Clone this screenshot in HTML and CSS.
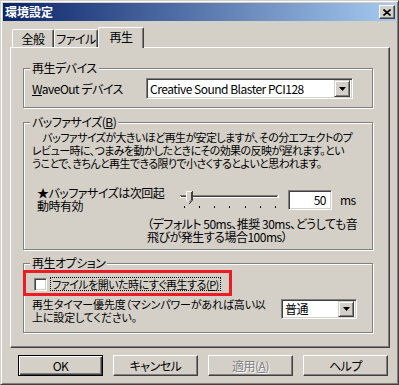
FILE: index.html
```html
<!DOCTYPE html>
<html lang="ja">
<head>
    <meta charset="UTF-8">
    <title>環境設定</title>
    <link rel="stylesheet" href="styles.css">
</head>
<body>
    <div class="window">
        <div class="titlebar">
            <span class="title">環境設定</span>
            <span class="close">
                <svg width="8" height="7" viewBox="0 0 8 7"><path d="M0.5 0.5 L7.5 6.5 M7.5 0.5 L0.5 6.5" stroke="#000" stroke-width="1.6"/></svg>
            </span>
        </div>

        <div class="tabbox">
            <div class="tabs">
                <div class="tab tab-general">全般</div>
                <div class="tab tab-file">ファイル</div>
                <div class="tab active">再生</div>
            </div>

            <div class="panel">
                <!-- 再生デバイス -->
                <div class="group group-device">
                    <div class="legend">再生デバイス</div>
                    <div class="device-row">
                        <span><u>W</u>aveOut デバイス</span>
                        <div class="combo combo-device">
                            <span class="combo-text">Creative Sound Blaster PCI128</span>
                            <span class="drop"><svg width="7" height="4"><polygon points="0,0 7,0 3.5,4" fill="#000"/></svg></span>
                        </div>
                    </div>
                </div>

                <!-- バッファサイズ -->
                <div class="group group-buffer">
                    <div class="legend">バッファサイズ(<u>B</u>)</div>
                    <p class="desc">　バッファサイズが大きいほど再生が安定しますが、その分エフェクトのプ<br>レビュー時に、つまみを動かしたときにその効果の反映が遅れます。とい<br>うことで、きちんと再生できる限りで小さくするとよいと思われます。</p>
                    <div class="buf-row">
                        <div class="buf-label">★バッファサイズは次回起<br>動時有効</div>
                        <svg class="slider" width="100" height="18" viewBox="0 0 100 18">
                            <rect x="1" y="4" width="98" height="1" fill="#808080"/>
                            <rect x="2" y="5" width="96" height="1" fill="#404040"/>
                            <rect x="1" y="6" width="99" height="1" fill="#fff"/>
                            <rect x="99" y="4" width="1" height="3" fill="#fff"/>
                            <polygon points="7,0 13,0 13,9 10,12 7,9" fill="#d4d0c8"/>
                            <path d="M7.5 9 V0.5 H12.5" stroke="#fff" fill="none"/>
                            <path d="M13.5 0 V9.5 L10 13 M12.5 1 V9 L10 11.5" stroke="#404040" fill="none" stroke-width="1"/>
                            <path d="M7.5 9 L10 11.5" stroke="#fff" fill="none"/>
                            <rect x="5" y="15" width="1" height="2" fill="#000"/>
                            <rect x="20" y="15" width="1" height="2" fill="#000"/>
                            <rect x="35" y="15" width="1" height="2" fill="#000"/>
                            <rect x="50" y="15" width="1" height="2" fill="#000"/>
                            <rect x="66" y="15" width="1" height="2" fill="#000"/>
                            <rect x="81" y="15" width="1" height="2" fill="#000"/>
                            <rect x="96" y="15" width="1" height="2" fill="#000"/>
                        </svg>
                        <div class="edit">50</div>
                        <span class="unit">ms</span>
                    </div>
                    <div class="note">（デフォルト 50ms、推奨 30ms、どうしても音<br>飛びが発生する場合100ms）</div>
                </div>

                <!-- 再生オプション -->
                <div class="group group-option">
                    <div class="legend">再生オプション</div>
                    <div class="check-row">
                        <span class="checkbox"></span>
                        <span class="focus">ファイルを開いた時にすぐ再生する(<u>P</u>)</span>
                    </div>
                    <div class="timer-row">
                        <div class="timer-text">再生タイマー優先度（マシンパワーがあれば高い以<br>上に設定してください。</div>
                        <div class="combo combo-timer">
                            <span class="combo-text">普通</span>
                            <span class="drop"><svg width="7" height="4"><polygon points="0,0 7,0 3.5,4" fill="#000"/></svg></span>
                        </div>
                    </div>
                    <div class="highlight"></div>
                </div>
            </div>
        </div>

        <div class="buttons">
            <button class="btn default">OK</button>
            <button class="btn">キャンセル</button>
            <button class="btn disabled">適用(<u>A</u>)</button>
            <button class="btn">ヘルプ</button>
        </div>
    </div>
</body>
</html>
```

FILE: styles.css
```css
body {
    margin: 0;
    font-family: "Noto Sans CJK JP", sans-serif;
    font-size: 12px;
    font-feature-settings: "palt";
    letter-spacing: -0.5px;
    color: #000;
    background: #d4d0c8;
}

.window {
    width: 399px;
    height: 385px;
    box-sizing: border-box;
    background: #d4d0c8;
    border: 1px solid;
    border-color: #d4d0c8 #404040 #404040 #d4d0c8;
    box-shadow: inset 1px 1px #fff, inset -1px -1px #808080;
    padding: 2px;
}

.titlebar {
    height: 18px;
    display: flex;
    align-items: center;
    justify-content: space-between;
    padding: 0 1px 0 2px;
    background: linear-gradient(to right, #0a246a, #a6caf0);
}

.title {
    color: #fff;
    font-weight: bold;
    line-height: 14px;
    letter-spacing: 0;
}

.close {
    width: 16px;
    height: 14px;
    box-sizing: border-box;
    display: flex;
    align-items: center;
    justify-content: center;
    background: #d4d0c8;
    border: 1px solid;
    border-color: #fff #404040 #404040 #fff;
    box-shadow: inset -1px -1px #808080;
}

/* タブ */
.tabbox {
    margin: 6px 0 0 7px;
    width: 380px;
}

.tabs {
    display: flex;
    align-items: flex-end;
    height: 20px;
    padding-left: 2px;
}

.tab {
    height: 18px;
    box-sizing: border-box;
    border: 1px solid;
    border-color: #fff #404040 transparent #fff;
    border-bottom: none;
    border-radius: 2px 2px 0 0;
    box-shadow: inset -1px 0 #808080;
    text-align: center;
    line-height: 16px;
    padding-top: 1px;
}

.tab-general {
    width: 42px;
}

.tab-file {
    width: 44px;
}

.tab.active {
    width: 46px;
    height: 21px;
    margin-bottom: -1px;
    position: relative;
    background: #d4d0c8;
    padding-top: 0;
    line-height: 17px;
}

.panel {
    height: 301px;
    box-sizing: border-box;
    border: 1px solid;
    border-color: #fff #404040 #404040 #fff;
    box-shadow: inset -1px -1px #808080;
    padding-top: 20px;
}

/* グループボックス */
.group {
    position: relative;
    width: 350px;
    box-sizing: border-box;
    margin-left: 12px;
    border: 1px solid #808080;
    box-shadow: inset 1px 1px #fff, 1px 1px #fff;
}

.legend {
    width: max-content;
    margin: -7px 0 0 6px;
    padding: 0 2px;
    background: #d4d0c8;
    line-height: 12px;
}

.group-device {
    height: 40px;
}

.group-buffer {
    height: 128px;
    margin-top: 14px;
}

.group-option {
    height: 70px;
    margin-top: 13px;
}

.device-row {
    display: grid;
    grid-template-columns: 114px 207px;
    align-items: center;
    margin-top: 4px;
    padding-left: 8px;
}

/* コンボボックス */
.combo {
    height: 21px;
    box-sizing: border-box;
    display: flex;
    align-items: center;
    justify-content: space-between;
    background: #fff;
    border: 1px solid;
    border-color: #808080 #fff #fff #808080;
    box-shadow: inset 1px 1px #404040, inset -1px -1px #d4d0c8;
    padding: 2px 2px 2px 3px;
}

.combo-text {
    line-height: 14px;
    white-space: nowrap;
}

.drop {
    width: 16px;
    height: 17px;
    box-sizing: border-box;
    display: flex;
    align-items: center;
    justify-content: center;
    background: #d4d0c8;
    border: 1px solid;
    border-color: #d4d0c8 #404040 #404040 #d4d0c8;
    box-shadow: inset 1px 1px #fff, inset -1px -1px #808080;
}

.desc {
    margin: 3px 0 0;
    padding-left: 8px;
    font-size: 11px;
    letter-spacing: -0.6px;
    line-height: 13px;
    white-space: nowrap;
}

.buf-row {
    display: flex;
    align-items: flex-start;
    margin-top: 16px;
    padding-left: 13px;
}

.buf-label {
    width: 142px;
    line-height: 13px;
    white-space: nowrap;
}

.slider {
    display: block;
    margin-top: 5px;
}

.edit {
    width: 44px;
    height: 20px;
    box-sizing: border-box;
    margin: 4px 0 0 9px;
    background: #fff;
    border: 1px solid;
    border-color: #808080 #fff #fff #808080;
    box-shadow: inset 1px 1px #404040, inset -1px -1px #d4d0c8;
    text-align: right;
    padding-right: 5px;
    line-height: 17px;
}

.unit {
    margin: 7px 0 0 8px;
    line-height: 13px;
}

.note {
    margin-top: 5px;
    padding-left: 123px;
    line-height: 13px;
    white-space: nowrap;
}

/* 再生オプション */
.check-row {
    display: flex;
    align-items: center;
    height: 14px;
    margin-top: 8px;
    padding-left: 10px;
}

.checkbox {
    width: 13px;
    height: 13px;
    box-sizing: border-box;
    background: #fff;
    border: 1px solid;
    border-color: #808080 #fff #fff #808080;
    box-shadow: inset 1px 1px #404040, inset -1px -1px #d4d0c8;
}

.focus {
    margin-left: 3px;
    padding: 0 1px;
    border: 1px dotted #000;
    font-size: 11px;
    letter-spacing: -0.5px;
    line-height: 12px;
    white-space: nowrap;
}

.timer-row {
    display: flex;
    align-items: flex-start;
    margin-top: 7px;
    padding-left: 8px;
}

.timer-text {
    width: 249px;
    font-size: 11px;
    letter-spacing: -0.15px;
    line-height: 13px;
    white-space: nowrap;
}

.combo-timer {
    width: 76px;
    height: 20px;
    margin-top: 1px;
}

.combo-timer .drop {
    height: 16px;
}

.highlight {
    position: absolute;
    left: -1px;
    top: 6px;
    width: 209px;
    height: 26px;
    box-sizing: border-box;
    border: 3px solid #ea1c24;
}

/* ボタン */
.buttons {
    display: flex;
    gap: 10px;
    margin: 7px 0 0 15px;
}

.btn {
    width: 85px;
    height: 21px;
    box-sizing: border-box;
    font: inherit;
    letter-spacing: inherit;
    color: #000;
    background: #d4d0c8;
    border: 1px solid;
    border-color: #fff #404040 #404040 #fff;
    box-shadow: inset -1px -1px #808080;
    padding: 0;
    line-height: 17px;
}

.btn.default {
    border: 1px solid #000;
    box-shadow: inset 1px 1px #fff, inset -1px -1px #404040, inset -2px -2px #808080;
}

.btn.disabled {
    color: #808080;
    text-shadow: 1px 1px #fff;
}
```
